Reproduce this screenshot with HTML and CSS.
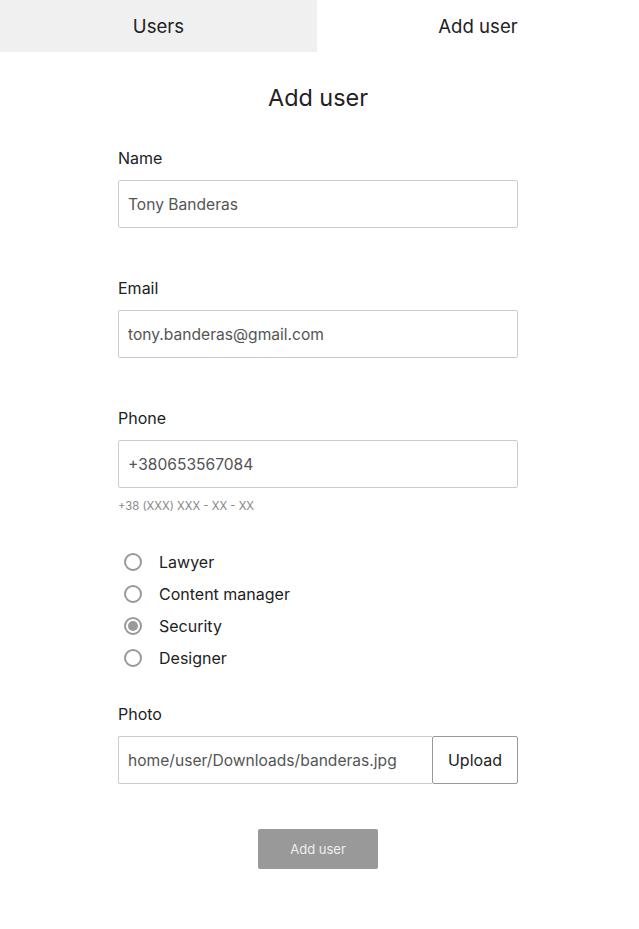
FILE: index.html
```html
<!DOCTYPE html>
<html lang="en">
<head>
<meta charset="utf-8">
<title>Add user</title>
<link rel="stylesheet" href="styles.css">
</head>
<body>
<div class="panel">
  <nav class="tabs">
    <div class="tab">Users</div>
    <div class="tab active">Add user</div>
  </nav>
  <main class="form">
    <h1 class="title">Add user</h1>
    <div class="field first">
      <div class="label">Name</div>
      <div class="input">Tony Banderas</div>
    </div>
    <div class="field">
      <div class="label">Email</div>
      <div class="input">tony.banderas@gmail.com</div>
    </div>
    <div class="field">
      <div class="label">Phone</div>
      <div class="input">+380653567084</div>
      <div class="hint">+38 (XXX) XXX - XX - XX</div>
    </div>
    <div class="radios">
      <div class="radio"><span class="dot"></span>Lawyer</div>
      <div class="radio"><span class="dot"></span>Content manager</div>
      <div class="radio"><span class="dot checked"></span>Security</div>
      <div class="radio"><span class="dot"></span>Designer</div>
    </div>
    <div class="field photo">
      <div class="label">Photo</div>
      <div class="file">
        <div class="input file-path">home/user/Downloads/banderas.jpg</div>
        <div class="upload">Upload</div>
      </div>
    </div>
    <div class="submit-row">
      <div class="submit">Add user</div>
    </div>
  </main>
</div>
</body>
</html>
```

FILE: styles.css
```css
* { box-sizing: border-box; }
html, body { margin: 0; padding: 0; background: #fff; }
body {
  font-family: Inter, "Noto Sans", sans-serif;
  color: #222;
}
.panel {
  width: 639px;
  height: 929px;
  background: #fff;
}
.tabs {
  display: flex;
  height: 52px;
}
.tab {
  flex: 0 0 317px;
  display: flex;
  align-items: center;
  justify-content: center;
  font-size: 18.6px;
  color: #222;
  background: #f0f0f0;
}
.tab.active {
  flex: 1;
  background: #fff;
}
.form {
  width: 400px;
  margin: 0 0 0 118px;
}
.title {
  margin: 32px 0 0;
  font-size: 23.4px;
  line-height: 28px;
  font-weight: 400;
  text-align: center;
  color: #222;
}
.field { margin-top: 50px; }
.field.first { margin-top: 36px; }
.label {
  font-size: 16px;
  line-height: 20px;
  color: #222;
}
.input {
  margin-top: 12px;
  height: 48px;
  border: 1px solid #ccc;
  border-radius: 2px;
  padding: 0 9px;
  display: flex;
  align-items: center;
  font-size: 15.6px;
  color: #555;
}
.hint {
  margin-top: 10px;
  font-size: 11.3px;
  line-height: 16px;
  color: #888;
}
.radios { margin-top: 32px; }
.radio {
  height: 32px;
  display: flex;
  align-items: center;
  font-size: 16px;
  color: #222;
}
.dot {
  width: 18px;
  height: 18px;
  border: 2px solid #999;
  border-radius: 50%;
  margin: 0 17px 0 6px;
  display: flex;
  align-items: center;
  justify-content: center;
}
.dot.checked::after {
  content: "";
  width: 10px;
  height: 10px;
  border-radius: 50%;
  background: #999;
}
.field.photo { margin-top: 30px; }
.file {
  display: flex;
  margin-top: 12px;
}
.file-path {
  margin-top: 0;
  flex: 1;
  border-radius: 2px 0 0 2px;
  border-right: none;
}
.upload {
  width: 86px;
  height: 48px;
  border: 1px solid #999;
  border-radius: 2px;
  display: flex;
  align-items: center;
  justify-content: center;
  font-size: 16px;
  color: #222;
}
.submit-row {
  display: flex;
  justify-content: center;
  margin-top: 45px;
}
.submit {
  width: 120px;
  height: 40px;
  background: #999;
  border-radius: 2px;
  color: #eee;
  font-size: 13px;
  display: flex;
  align-items: center;
  justify-content: center;
}
```
